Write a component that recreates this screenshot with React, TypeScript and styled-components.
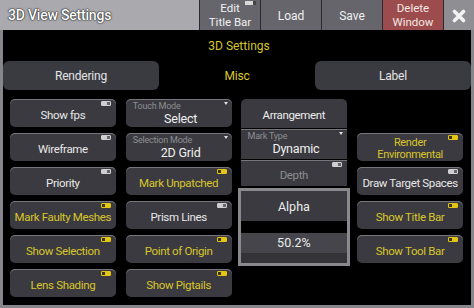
import styled, { createGlobalStyle, css } from 'styled-components';

const GlobalStyle = createGlobalStyle`
  html, body {
    margin: 0;
    padding: 0;
    background: #000;
  }
  body {
    font-family: Roboto, "Liberation Sans", sans-serif;
  }
`;

type Toggle = { label: string; on?: boolean; tall?: boolean };

const col1: Toggle[] = [
  { label: 'Show fps' },
  { label: 'Wireframe' },
  { label: 'Priority' },
  { label: 'Mark Faulty Meshes', on: true },
  { label: 'Show Selection', on: true },
  { label: 'Lens Shading', on: true },
];

const col2Toggles: Toggle[] = [
  { label: 'Mark Unpatched', on: true },
  { label: 'Prism Lines' },
  { label: 'Point of Origin', on: true },
  { label: 'Show Pigtails', on: true },
];

const col4: Toggle[] = [
  { label: 'Render Environmental', on: true, tall: true },
  { label: 'Draw Target Spaces' },
  { label: 'Show Title Bar', on: true },
  { label: 'Show Tool Bar', on: true },
];

const CloseIcon = () => (
  <svg width="14" height="14" viewBox="0 0 14 14">
    <path d="M2.5 2.5 L11.5 11.5 M11.5 2.5 L2.5 11.5" stroke="#f2f2f2" strokeWidth="3.6" strokeLinecap="round" />
  </svg>
);

const ToggleButton = ({ label, on, tall }: Toggle) => (
  <Button $on={on}>
    <Indicator $on={on} />
    <ButtonText $small={tall}>{tall ? <>Render<br />Environmental</> : label}</ButtonText>
  </Button>
);

const App = () => {
  return (
    <>
      <GlobalStyle />
      <Window>
        <TitleBar>
          <TitleLabel>3D View Settings</TitleLabel>
          <TitleButton $twoLine>
            <WindowGlyph />
            Edit<br />Title Bar
          </TitleButton>
          <TitleButton>Load</TitleButton>
          <TitleButton>Save</TitleButton>
          <TitleButton $variant="danger" $twoLine>Delete<br />Window</TitleButton>
          <TitleButton $variant="close"><CloseIcon /></TitleButton>
        </TitleBar>
        <Body>
          <Heading>3D Settings</Heading>
          <TabRow>
            <Tab>Rendering</Tab>
            <Tab $active>Misc</Tab>
            <Tab>Label</Tab>
          </TabRow>
          <Content>
            <Column>
              {col1.map((t) => <ToggleButton key={t.label} {...t} />)}
            </Column>
            <Column>
              <SelectButton>
                <Caret />
                <SmallLabel>Touch Mode</SmallLabel>
                <SelectValue>Select</SelectValue>
              </SelectButton>
              <SelectButton>
                <Caret />
                <SmallLabel>Selection Mode</SmallLabel>
                <SelectValue>2D Grid</SelectValue>
              </SelectButton>
              {col2Toggles.map((t) => <ToggleButton key={t.label} {...t} />)}
            </Column>
            <StackColumn>
              <StackItem $h={29} $first>
                <ButtonText>Arrangement</ButtonText>
              </StackItem>
              <StackItem $h={30} $select>
                <Caret />
                <SmallLabel>Mark Type</SmallLabel>
                <SelectValue>Dynamic</SelectValue>
              </StackItem>
              <StackItem $h={26}>
                <Indicator />
                <ButtonText $dim>Depth</ButtonText>
              </StackItem>
              <AlphaFrame>
                <AlphaTitle>Alpha</AlphaTitle>
                <AlphaValue>50.2%</AlphaValue>
              </AlphaFrame>
            </StackColumn>
            <Column $offset>
              {col4.map((t) => <ToggleButton key={t.label} {...t} />)}
            </Column>
          </Content>
        </Body>
      </Window>
    </>
  );
};

const Window = styled.div`
  width: 474px;
  height: 308px;
  display: flex;
  flex-direction: column;
  background: #000;
  overflow: hidden;
`;

const TitleBar = styled.div`
  height: 30px;
  display: flex;
  gap: 1px;
  background: #2a2a2e;
`;

const TitleLabel = styled.div`
  width: 199px;
  background: #a9a9ae;
  color: #fff;
  font-size: 14px;
  font-weight: 500;
  letter-spacing: -0.2px;
  display: flex;
  align-items: center;
  padding-left: 8px;
  box-sizing: border-box;
  text-shadow: 0 0 1px #222, 0 0 1px #222, 0 0 2px #333;
`;

const TitleButton = styled.div<{ $variant?: 'danger' | 'close'; $twoLine?: boolean }>`
  position: relative;
  width: 60px;
  background: #65656b;
  color: #f0f0f0;
  font-size: ${(p) => (p.$twoLine ? '11.5px' : '12px')};
  line-height: ${(p) => (p.$twoLine ? '13.5px' : '14px')};
  text-align: center;
  display: flex;
  align-items: center;
  justify-content: center;
  padding-top: 1px;
  box-sizing: border-box;
  ${(p) => p.$variant === 'danger' && css`
    background: #9c4c4c;
    color: #f3e6e6;
  `}
  ${(p) => p.$variant === 'close' && css`
    width: 30px;
    background: #8e8e93;
  `}
`;

const WindowGlyph = styled.span`
  position: absolute;
  top: 1px;
  right: 4px;
  width: 8px;
  height: 4px;
  background: #d8d8d8;
  border-right: 3px solid #444;
`;

const Body = styled.div`
  flex: 1;
  display: flex;
  flex-direction: column;
  border: 3px solid #86868b;
  border-top: none;
  background: #000;
`;

const Heading = styled.div`
  height: 31px;
  display: flex;
  align-items: center;
  justify-content: center;
  color: #d9c62a;
  font-size: 12px;
  padding-left: 4px;
`;

const TabRow = styled.div`
  height: 29px;
  display: flex;
`;

const Tab = styled.div<{ $active?: boolean }>`
  flex: 1;
  display: flex;
  align-items: center;
  justify-content: center;
  font-size: 12px;
  letter-spacing: -0.2px;
  color: ${(p) => (p.$active ? '#d9c62a' : '#e4e4e4')};
  background: ${(p) => (p.$active ? '#000' : '#3a3a41')};
  border-radius: 6px;
`;

const Content = styled.div`
  display: flex;
  gap: 10px;
  padding: 9px 8px 0 7px;
`;

const Column = styled.div<{ $offset?: boolean }>`
  width: 106px;
  display: flex;
  flex-direction: column;
  gap: 6px;
  padding-top: ${(p) => (p.$offset ? '34px' : '0')};
`;

const StackColumn = styled.div`
  width: 107px;
  display: flex;
  flex-direction: column;
  gap: 1px;
  margin-left: -1px;
`;

const buttonBase = css`
  position: relative;
  background: #3a3a40;
  box-shadow: inset 0 1px 0 #75757b;
  display: flex;
  align-items: center;
  justify-content: center;
  box-sizing: border-box;
`;

const Button = styled.div<{ $on?: boolean }>`
  ${buttonBase};
  height: 28px;
  border-radius: 5px;
  color: ${(p) => (p.$on ? '#d9c62a' : '#e8e8e8')};
`;

const ButtonText = styled.span<{ $small?: boolean; $dim?: boolean }>`
  font-size: ${(p) => (p.$small ? '11px' : '11.5px')};
  letter-spacing: -0.35px;
  line-height: ${(p) => (p.$small ? '12px' : '14px')};
  text-align: center;
  padding-top: 3px;
  color: ${(p) => (p.$dim ? '#8c8c90' : 'inherit')};
  white-space: nowrap;
`;

const Indicator = styled.span<{ $on?: boolean }>`
  position: absolute;
  top: 2px;
  right: 5px;
  width: 10px;
  height: 5px;
  border-radius: 1px;
  box-sizing: border-box;
  background: ${(p) => (p.$on ? '#e2c612' : '#cfcfd2')};
  border: 1px solid ${(p) => (p.$on ? '#e2c612' : '#cfcfd2')};
  &::after {
    content: '';
    position: absolute;
    top: 0;
    ${(p) => (p.$on ? 'left: 0;' : 'right: 0;')}
    width: 3px;
    height: 3px;
    background: ${(p) => (p.$on ? '#3a3420' : '#66666a')};
  }
`;

const SelectButton = styled.div`
  ${buttonBase};
  height: 28px;
  border-radius: 5px;
  flex-direction: column;
  align-items: stretch;
  justify-content: flex-start;
`;

const Caret = styled.span`
  position: absolute;
  top: 3px;
  right: 4px;
  width: 0;
  height: 0;
  border-left: 2.5px solid transparent;
  border-right: 2.5px solid transparent;
  border-top: 3px solid #e0e0e0;
`;

const SmallLabel = styled.span`
  font-size: 9px;
  letter-spacing: -0.2px;
  line-height: 11px;
  color: #8e8e92;
  padding: 2px 0 0 7px;
`;

const SelectValue = styled.span`
  font-size: 12.5px;
  letter-spacing: -0.2px;
  line-height: 14px;
  color: #f0f0f0;
  text-align: center;
  padding-left: 4px;
`;

const StackItem = styled.div<{ $h: number; $first?: boolean; $select?: boolean }>`
  ${buttonBase};
  height: ${(p) => p.$h}px;
  color: #ececec;
  border-radius: ${(p) => (p.$first ? '5px 5px 0 0' : '0')};
  box-shadow: ${(p) => (p.$first ? 'none' : 'inset 0 1px 0 #75757b')};
  ${(p) => p.$select && css`
    flex-direction: column;
    align-items: stretch;
    justify-content: flex-start;
  `}
`;

const AlphaFrame = styled.div`
  margin: 1px -3px 0;
  height: 78px;
  border: 3px solid #8a8a8e;
  box-sizing: border-box;
  background: #000;
  display: flex;
  flex-direction: column;
  justify-content: space-between;
`;

const AlphaTitle = styled.div`
  height: 30px;
  background: #3a3a40;
  color: #ececec;
  font-size: 12.5px;
  display: flex;
  align-items: center;
  justify-content: center;
`;

const AlphaValue = styled.div`
  height: 30px;
  background: linear-gradient(#45454b 0 20px, #333338 20px);
  color: #ececec;
  font-size: 12.5px;
  line-height: 20px;
  text-align: center;
`;

export default App;
